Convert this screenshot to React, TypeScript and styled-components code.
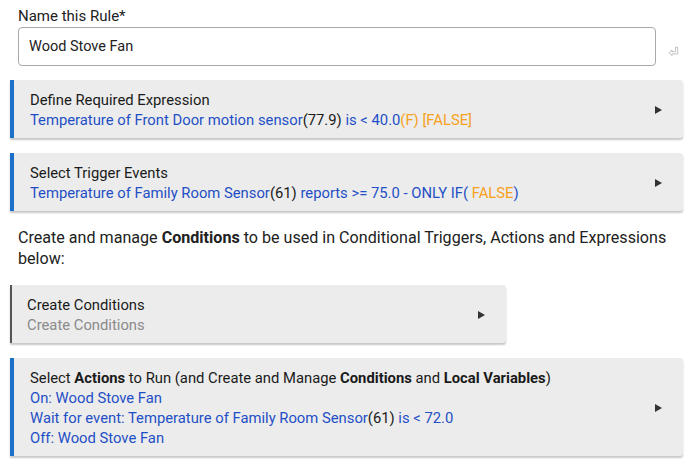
import React from "react";
import styled, { createGlobalStyle } from "styled-components";

const GlobalStyle = createGlobalStyle`
  html, body {
    margin: 0;
    padding: 0;
    background: #ffffff;
  }
  body {
    font-family: Roboto, "Noto Sans", Arial, sans-serif;
    color: #212121;
  }
`;

const BLUE = "#1f4fc6";
const ORANGE = "#f7a11a";

export default function App() {
  return (
    <Page>
      <GlobalStyle />
      <NameField>
        <Label>Name this Rule*</Label>
        <InputRow>
          <NameInput defaultValue="Wood Stove Fan" />
          <ReturnIcon viewBox="0 0 10 10">
            <path
              d="M6.8 1 H8.8 V7.2 H3.6 V8.8 L1 6.2 L3.6 3.6 V5.2 H6.8 Z"
              fill="none"
              stroke="#b0b0b0"
              strokeWidth="0.7"
              strokeLinejoin="round"
            />
          </ReturnIcon>
        </InputRow>
      </NameField>

      <Card $accent="blue">
        <CardBody>
          <Title>Define Required Expression</Title>
          <Line>
            <Blue>Temperature of Front Door motion sensor</Blue>
            <Dark>(77.9)</Dark>
            <Blue> is &lt; 40.0</Blue>
            <Orange>(F) [FALSE]</Orange>
          </Line>
        </CardBody>
        <Arrow />
      </Card>

      <Card $accent="blue">
        <CardBody>
          <Title>Select Trigger Events</Title>
          <Line>
            <Blue>Temperature of Family Room Sensor</Blue>
            <Dark>(61)</Dark>
            <Blue> reports &gt;= 75.0 - ONLY IF( </Blue>
            <Orange>FALSE</Orange>
            <Blue>)</Blue>
          </Line>
        </CardBody>
        <Arrow />
      </Card>

      <Paragraph>
        Create and manage <b>Conditions</b> to be used in Conditional Triggers,
        Actions and Expressions below:
      </Paragraph>

      <Card $accent="gray" $narrow>
        <CardBody>
          <Title>Create Conditions</Title>
          <Muted>Create Conditions</Muted>
        </CardBody>
        <Arrow />
      </Card>

      <Card $accent="blue">
        <CardBody>
          <Title>
            Select <b>Actions</b> to Run (and Create and Manage{" "}
            <b>Conditions</b> and <b>Local Variables</b>)
          </Title>
          <Line>
            <Blue>On: Wood Stove Fan</Blue>
          </Line>
          <Line>
            <Blue>Wait for event: Temperature of Family Room Sensor</Blue>
            <Dark>(61)</Dark>
            <Blue> is &lt; 72.0</Blue>
          </Line>
          <Line>
            <Blue>Off: Wood Stove Fan</Blue>
          </Line>
        </CardBody>
        <Arrow />
      </Card>
    </Page>
  );
}

const Page = styled.div`
  padding: 6px 7px 0 10px;
  display: flex;
  flex-direction: column;
`;

const NameField = styled.div`
  padding-left: 8px;
  margin-bottom: 14px;
`;

const Label = styled.div`
  font-size: 15px;
  line-height: 20px;
  color: #212121;
`;

const InputRow = styled.div`
  display: flex;
  align-items: center;
  gap: 12px;
  margin-top: 1px;
`;

const NameInput = styled.input`
  width: 638px;
  height: 39px;
  box-sizing: border-box;
  border: 1px solid #a9a9a9;
  border-radius: 4px;
  padding: 0 10px;
  font-family: Roboto, "Noto Sans", Arial, sans-serif;
  font-size: 14.5px;
  color: #212121;
  outline: none;
`;

const ReturnIcon = styled.svg`
  width: 11px;
  height: 11px;
  margin-top: 9px;
`;

const Card = styled.div<{ $accent: "blue" | "gray"; $narrow?: boolean }>`
  display: flex;
  align-items: center;
  width: ${(p) => (p.$narrow ? "496px" : "673px")};
  box-sizing: border-box;
  background: #ececec;
  border-left: ${(p) =>
    p.$accent === "blue" ? "4px solid #1b70c8" : "2px solid #555555"};
  border-radius: 0 3px 3px 0;
  box-shadow: 0 2px 2px rgba(0, 0, 0, 0.22);
  padding: 10px 21px 8px
    ${(p) => (p.$accent === "blue" ? "16px" : "15px")};
  margin-bottom: 15px;
`;

const CardBody = styled.div`
  flex: 1;
  display: flex;
  flex-direction: column;
`;

const Title = styled.div`
  font-size: 14.8px;
  line-height: 20px;
  color: #1a1a1a;

  b {
    font-weight: 700;
  }
`;

const Line = styled.div`
  font-size: 14.8px;
  line-height: 20px;
`;

const Blue = styled.span`
  color: ${BLUE};
`;

const Dark = styled.span`
  color: #1a1a1a;
`;

const Orange = styled.span`
  color: ${ORANGE};
`;

const Muted = styled.div`
  font-size: 14.8px;
  line-height: 20px;
  color: #8a8a8a;
`;

const Arrow = styled.div`
  width: 0;
  height: 0;
  border-top: 4px solid transparent;
  border-bottom: 4px solid transparent;
  border-left: 7px solid #333333;
`;

const Paragraph = styled.p`
  margin: 1px 0 16px 8px;
  font-size: 16.1px;
  line-height: 21px;
  color: #212121;

  b {
    font-weight: 700;
  }
`;
